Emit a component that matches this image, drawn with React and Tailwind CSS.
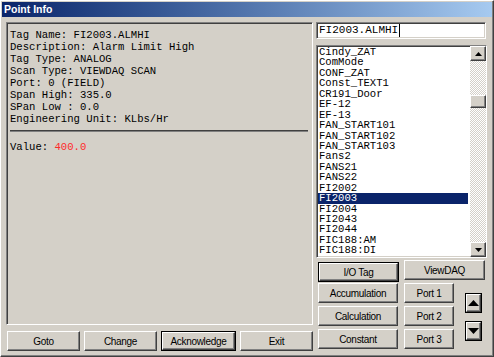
import React from 'react';

const items = [
  'Cindy_ZAT', 'ComMode', 'CONF_ZAT', 'Const_TEXT1', 'CR191_Door', 'EF-12', 'EF-13',
  'FAN_START101', 'FAN_START102', 'FAN_START103', 'Fans2', 'FANS21', 'FANS22',
  'FI2002', 'FI2003', 'FI2004', 'FI2043', 'FI2044', 'FIC188:AM', 'FIC188:DI',
];

const info = [
  'Tag Name: FI2003.ALMHI',
  'Description: Alarm Limit High',
  'Tag Type: ANALOG',
  'Scan Type: VIEWDAQ SCAN',
  'Port: 0 (FIELD)',
  'Span High: 335.0',
  'SPan Low : 0.0',
  'Engineering Unit: KLbs/Hr',
];

const sunken =
  'border border-t-[#808080] border-l-[#808080] border-r-white border-b-white shadow-[inset_1px_1px_0_#404040,inset_-1px_-1px_0_#d4d0c8]';

// classic win2k push button
const Btn = ({ children, className = '', def = false }) => {
  const face = (
    <div className="flex h-full w-full items-center justify-center border border-t-white border-l-white border-r-[#404040] border-b-[#404040] bg-[#d4d0c8] shadow-[inset_-1px_-1px_0_#808080] font-['Liberation_Sans',sans-serif] text-[10px] tracking-[-0.3px] text-black">
      {children}
    </div>
  );
  if (def) return <div className={`border border-black ${className}`}>{face}</div>;
  return <div className={className}>{face}</div>;
};

const ScrollBtn = ({ up }) => (
  <div className="flex h-[15px] w-[16px] items-center justify-center border border-t-white border-l-white border-r-[#404040] border-b-[#404040] bg-[#d4d0c8] shadow-[inset_-1px_-1px_0_#808080]">
    <svg width="7" height="4" viewBox="0 0 7 4">
      {up ? <path d="M3.5 0 L7 4 L0 4 Z" fill="#000" /> : <path d="M0 0 L7 0 L3.5 4 Z" fill="#000" />}
    </svg>
  </div>
);

const ArrowBtn = ({ up }) => (
  <div className="flex h-[20px] w-[17px] items-center justify-center border border-black">
    <div className="flex h-full w-full items-center justify-center border border-t-white border-l-white border-r-[#404040] border-b-[#404040] bg-[#d4d0c8] shadow-[inset_-1px_-1px_0_#808080]">
      <svg width="11" height="6" viewBox="0 0 11 6">
        {up ? <path d="M5.5 0 L11 6 L0 6 Z" fill="#000" /> : <path d="M0 0 L11 0 L5.5 6 Z" fill="#000" />}
      </svg>
    </div>
  </div>
);

export default function App() {
  return (
    <div className="flex h-[357px] w-[494px] flex-col border border-t-white border-l-white border-r-[#404040] border-b-[#404040] bg-[#d4d0c8] p-px shadow-[inset_-1px_-1px_0_#808080]">
      {/* title bar */}
      <div className="flex h-[15px] items-center bg-linear-to-r from-[#0a246a] to-[#a6caf0] pl-[2px] font-['Liberation_Sans',sans-serif] text-[10.5px] font-bold text-white">
        Point Info
      </div>

      <div className="flex pl-[4px] pt-[5px]">
        {/* left side */}
        <div className="flex w-[307px] flex-col">
          <div className={`h-[303px] ${sunken} pl-[3px] pr-[4px] pt-[6px] font-['Liberation_Mono',monospace] text-[10.6px] leading-[12px] text-black`}>
            {info.map((l) => (
              <div key={l} className="whitespace-pre">{l}</div>
            ))}
            <div className="mt-[5px] h-[2px] border-t border-b border-t-[#404040] border-b-[#808080]" />
            <div className="mt-[9px] whitespace-pre">
              Value: <span className="text-[#ff2a2a]">400.0</span>
            </div>
          </div>
          <div className="mt-[6px] flex h-[20px] gap-[4px] pl-px">
            <Btn className="h-[20px] w-[73px]">Goto</Btn>
            <Btn className="h-[20px] w-[73px]">Change</Btn>
            <Btn def className="h-[20px] w-[75px]">Acknowledge</Btn>
            <Btn className="h-[20px] w-[73px]">Exit</Btn>
          </div>
        </div>

        {/* right side */}
        <div className="ml-[3px] flex w-[171px] flex-col">
          <div className={`flex h-[17px] w-[170px] items-center bg-white pl-[2px] ${sunken} font-['Liberation_Mono',monospace] text-[11px] text-black`}>
            <span>FI2003.ALMHI</span>
            <span className="ml-px h-[13px] w-px bg-black" />
          </div>

          <div className={`mt-[6px] flex h-[213px] w-[171px] bg-white ${sunken}`}>
            <div className="flex w-[151px] flex-col pl-px pt-px font-['Liberation_Mono',monospace] text-[10.6px] leading-[10.4px] text-black">
              {items.map((it) => (
                <div
                  key={it}
                  className={`flex h-[10.45px] items-center pl-px ${it === 'FI2003' ? 'bg-[#0a246a] text-white' : ''}`}
                >
                  {it}
                </div>
              ))}
            </div>
            <div className="ml-[2px] flex w-[16px] flex-col bg-[repeating-conic-gradient(#d4d0c8_0_25%,#ffffff_0_50%)] bg-size-[2px_2px]">
              <ScrollBtn up />
              <div className="mt-[34px] h-[13px] w-[16px] border border-t-white border-l-white border-r-[#404040] border-b-[#404040] bg-[#d4d0c8] shadow-[inset_-1px_-1px_0_#808080]" />
              <div className="flex-1" />
              <ScrollBtn />
            </div>
          </div>

          <div className="mt-[2px] flex">
            <Btn def className="ml-[2px] mt-[2px] h-[20px] w-[81px]">I/O Tag</Btn>
            <Btn className="ml-[5px] h-[20px] w-[81px]">ViewDAQ</Btn>
          </div>
          <div className="mt-px flex">
            <div className="ml-[2px] flex w-[80px] flex-col gap-[3px]">
              <Btn className="h-[20px]">Accumulation</Btn>
              <Btn className="h-[20px]">Calculation</Btn>
              <Btn className="h-[20px]">Constant</Btn>
            </div>
            <div className="ml-[6px] flex w-[50px] flex-col gap-[3px]">
              <Btn className="h-[20px]">Port 1</Btn>
              <Btn className="h-[20px]">Port 2</Btn>
              <Btn className="h-[20px]">Port 3</Btn>
            </div>
            <div className="ml-[11px] flex flex-col gap-[8px] pt-[10px]">
              <ArrowBtn up />
              <ArrowBtn />
            </div>
          </div>
        </div>
      </div>
    </div>
  );
}
